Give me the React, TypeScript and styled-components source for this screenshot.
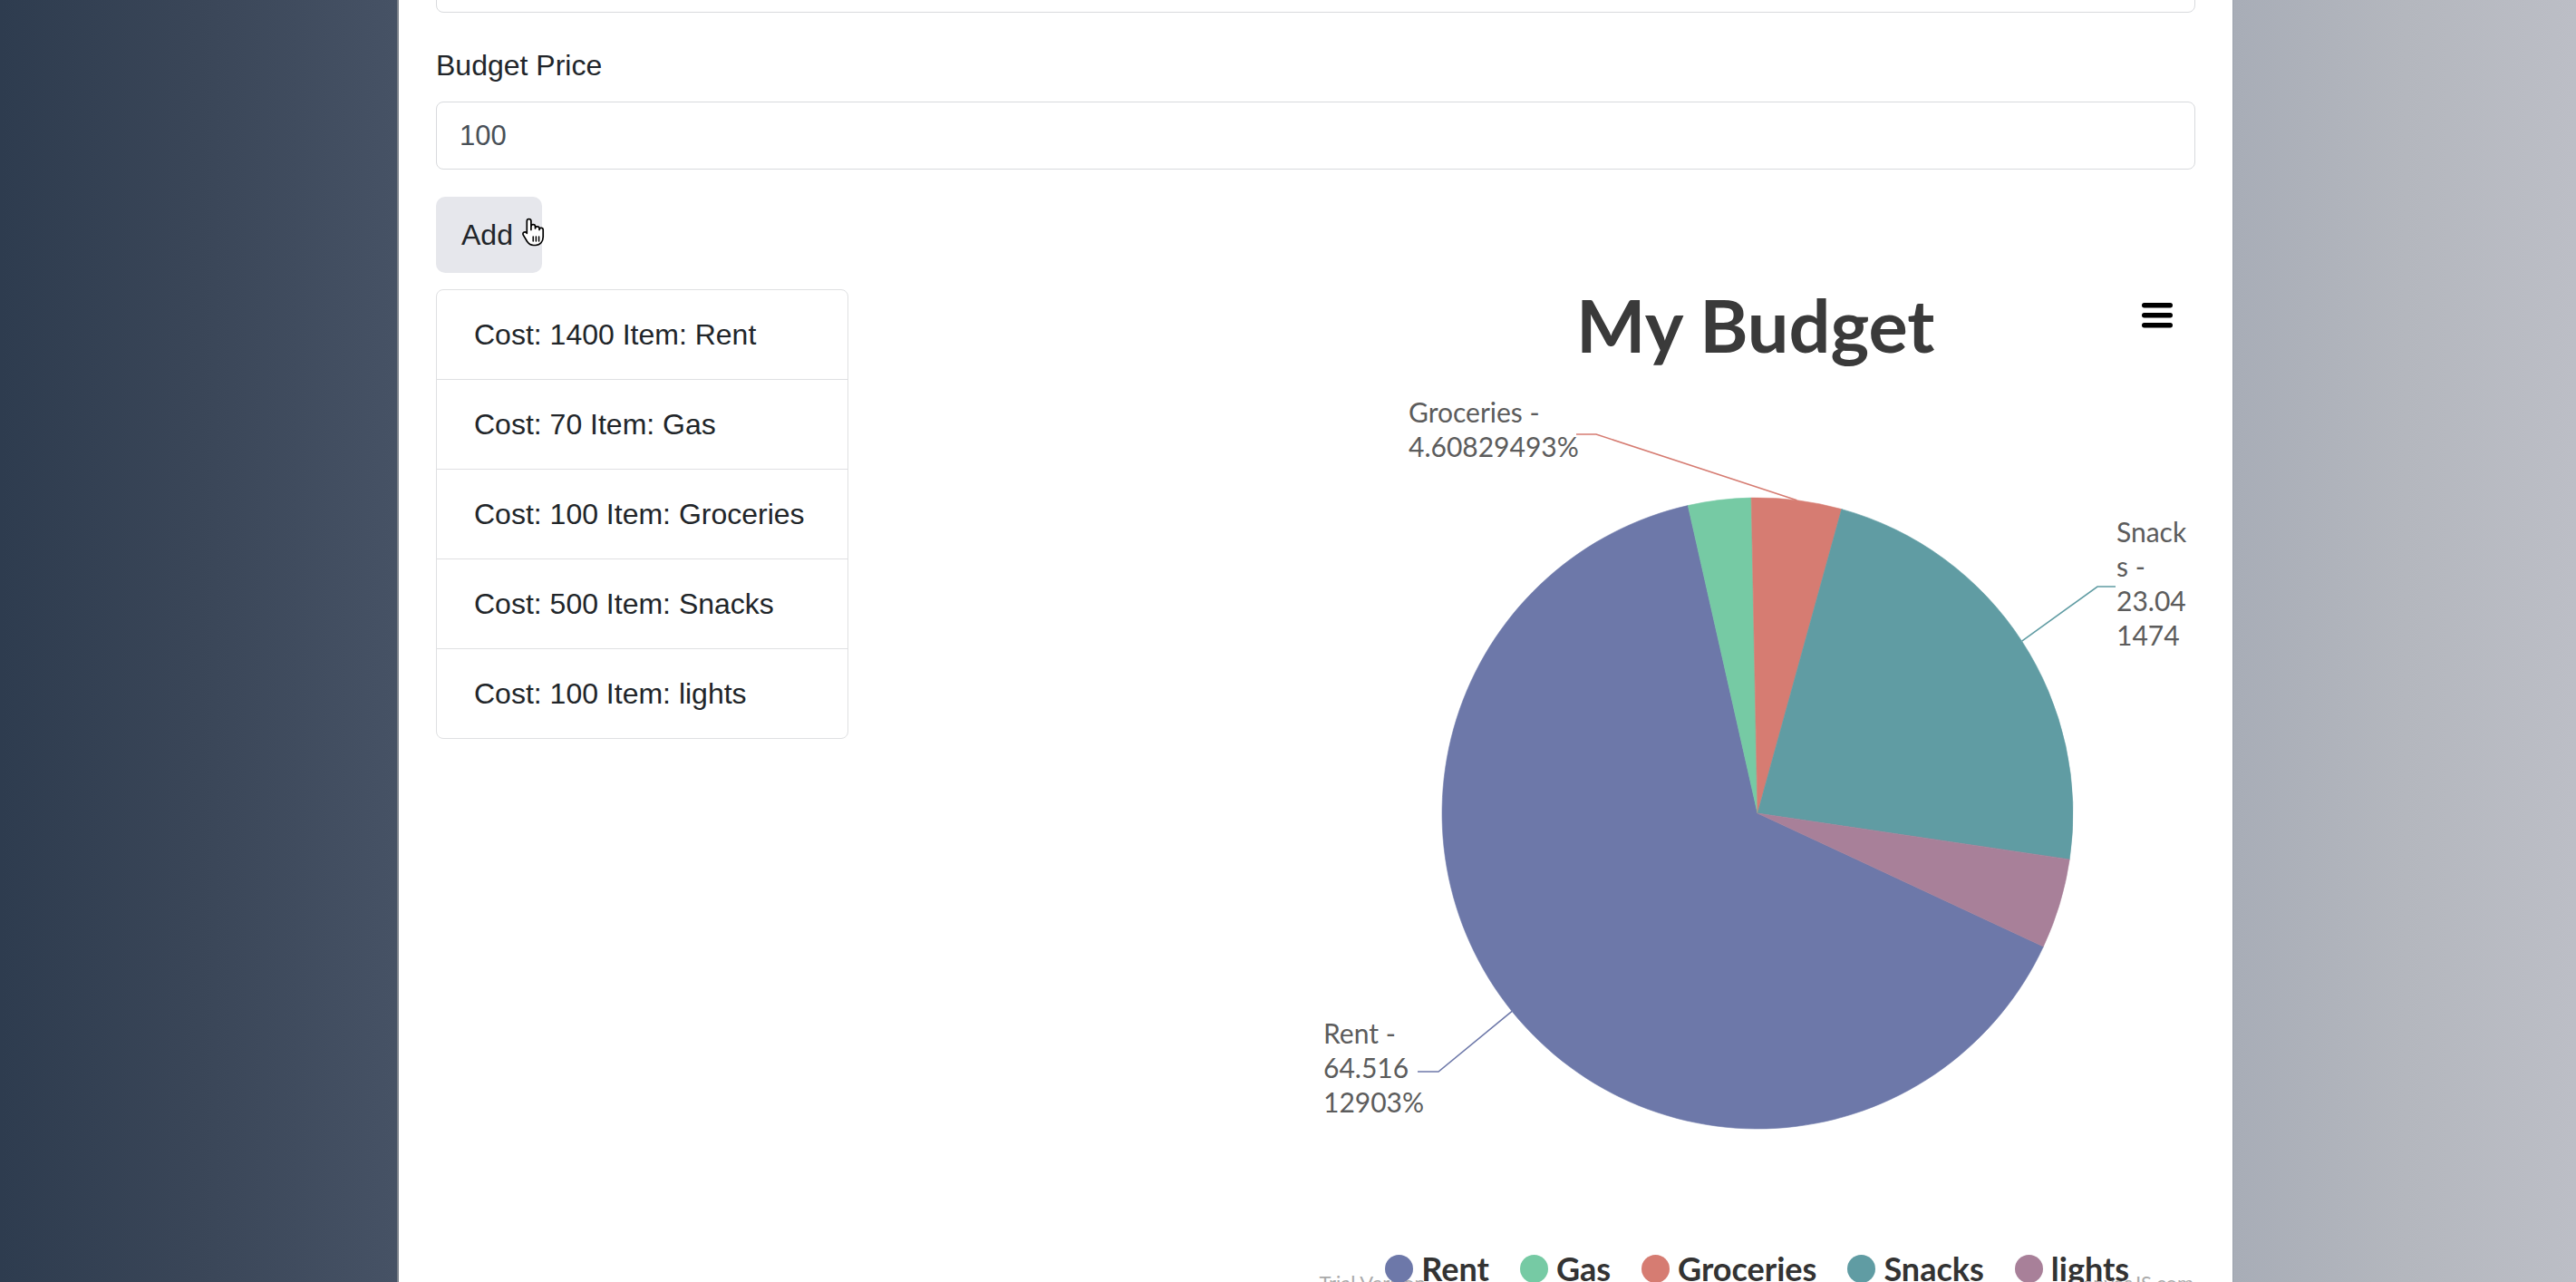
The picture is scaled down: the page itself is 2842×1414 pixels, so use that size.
import styled, { createGlobalStyle } from 'styled-components';

type Expense = {
  cost: number;
  name: string;
  color: string;
};

type SliceLabel = {
  name: string;
  lines: string[];
  x: number;
  y: number;
  elbow: [number, number][];
};

const expenses: Expense[] = [
  { cost: 1400, name: 'Rent', color: '#6d78a9' },
  { cost: 70, name: 'Gas', color: '#76caa4' },
  { cost: 100, name: 'Groceries', color: '#d67c72' },
  { cost: 500, name: 'Snacks', color: '#609ca3' },
  { cost: 100, name: 'lights', color: '#a88099' },
];

const PIE = { cx: 487, cy: 494, r: 348, start: 25 };
const LINE_HEIGHT = 38;

// only the labels that the chart drew; gas and lights are hidden
const sliceLabels: SliceLabel[] = [
  {
    name: 'Groceries',
    lines: ['Groceries -', '4.60829493%'],
    x: 102,
    y: 63,
    elbow: [
      [287, 76],
      [309, 76],
    ],
  },
  {
    name: 'Snacks',
    lines: ['Snack', 's -', '23.04', '1474'],
    x: 883,
    y: 195,
    elbow: [
      [882, 244],
      [862, 244],
    ],
  },
  {
    name: 'Rent',
    lines: ['Rent -', '64.516', '12903%'],
    x: 8,
    y: 748,
    elbow: [
      [112, 779],
      [135, 779],
    ],
  },
];

const toRad = (deg: number) => (deg * Math.PI) / 180;

const pointAt = (deg: number, r = PIE.r) => [PIE.cx + r * Math.cos(toRad(deg)), PIE.cy + r * Math.sin(toRad(deg))];

const arcPath = (from: number, to: number) => {
  const [x0, y0] = pointAt(from);
  const [x1, y1] = pointAt(to);
  const large = to - from > 180 ? 1 : 0;
  return `M${PIE.cx} ${PIE.cy} L${x0} ${y0} A${PIE.r} ${PIE.r} 0 ${large} 1 ${x1} ${y1} Z`;
};

const total = expenses.reduce((sum, e) => sum + e.cost, 0);

const slices = expenses.reduce<{ expense: Expense; from: number; to: number }[]>((acc, expense) => {
  const from = acc.length ? acc[acc.length - 1].to : PIE.start;
  acc.push({ expense, from, to: from + (expense.cost / total) * 360 });
  return acc;
}, []);

const GlobalStyle = createGlobalStyle`
  html, body {
    margin: 0;
    padding: 0;
    height: 100%;
    overflow: hidden;
  }
  body {
    font-family: "Liberation Sans", Arial, sans-serif;
    color: #212529;
  }
  * {
    box-sizing: border-box;
  }
`;

export default function App() {
  return (
    <>
      <GlobalStyle />
      <Screen>
        <DesktopLeft />
        <Panel>
          <TitleInput readOnly value="lights" />
          <FormGroup>
            <Label>Budget Price</Label>
            <TextInput readOnly value="100" />
          </FormGroup>
          <AddButton>
            Add
            <HandCursor />
          </AddButton>
          <ContentRow>
            <ItemList>
              {expenses.map((e) => (
                <Item key={e.name}>
                  Cost: {e.cost} Item: {e.name}
                </Item>
              ))}
            </ItemList>
            <BudgetChart />
          </ContentRow>
        </Panel>
        <DesktopRight />
      </Screen>
    </>
  );
}

function BudgetChart() {
  return (
    <Chart>
      <ChartHeader>
        <ChartTitle>My Budget</ChartTitle>
        <MenuButton aria-label="chart menu">
          <svg width="34" height="30" viewBox="0 0 34 30">
            <rect x="0" y="1" width="34" height="5.5" rx="2.7" fill="#000" />
            <rect x="0" y="12" width="34" height="5.5" rx="2.7" fill="#000" />
            <rect x="0" y="23" width="34" height="5.5" rx="2.7" fill="#000" />
          </svg>
        </MenuButton>
      </ChartHeader>

      <PieSvg viewBox="0 0 970 976" width="970" height="976">
        {slices.map(({ expense, from, to }) => (
          <path
            key={expense.name}
            d={arcPath(from, to)}
            fill={expense.color}
            stroke={expense.color}
            strokeWidth="0.6"
          />
        ))}
        {sliceLabels.map((label) => {
          const slice = slices.find((s) => s.expense.name === label.name)!;
          const [ax, ay] = pointAt((slice.from + slice.to) / 2);
          const points = [...label.elbow, [ax, ay]].map((p) => p.join(',')).join(' ');
          return (
            <g key={label.name}>
              <polyline points={points} fill="none" stroke={slice.expense.color} strokeWidth="1.6" />
              <LabelText x={label.x} y={label.y}>
                {label.lines.map((line, i) => (
                  <tspan key={line} x={label.x} dy={i === 0 ? 0 : LINE_HEIGHT}>
                    {line}
                  </tspan>
                ))}
              </LabelText>
            </g>
          );
        })}
      </PieSvg>

      <LegendArea>
        <Watermark $side="left">Trial Version</Watermark>
        <Watermark $side="right">CanvasJS.com</Watermark>
        <Legend>
          {expenses.map((e) => (
            <LegendItem key={e.name}>
              <LegendDot $color={e.color} />
              {e.name}
            </LegendItem>
          ))}
        </Legend>
      </LegendArea>
    </Chart>
  );
}

function HandCursor() {
  return (
    <CursorSvg width="28" height="36" viewBox="0 0 28 36">
      <path
        d="M8.5 2.5c1.4 0 2.4 1 2.4 2.4v9.6V11c0-1.3 1-2.3 2.3-2.3s2.3 1 2.3 2.3v2c0-1.3 1-2.2 2.2-2.2s2.3 1 2.3 2.2v1.4c0-1.2 1-2.1 2.1-2.1s2.1.9 2.1 2.2v7.8c0 5-3.2 9.2-8.4 9.2h-2.2c-3.2 0-5.3-1.6-7.1-4.2L2.4 20.4c-.8-1.2-.5-2.600.5-3.200 1-.6 2.300-.3 3.100.7l.3.4V4.9c0-1.400.8-2.400 2.200-2.400z"
        fill="#fff"
        stroke="#000"
        strokeWidth="1.7"
        strokeLinejoin="round"
      />
      <path d="M13.2 22v5M16.4 22v5M19.6 22v5" stroke="#000" strokeWidth="1.5" strokeLinecap="round" />
    </CursorSvg>
  );
}

const Screen = styled.div`
  display: flex;
  width: 100vw;
  height: 100vh;
  overflow: hidden;
`;

const DesktopLeft = styled.div`
  flex: 0 0 440px;
  background: linear-gradient(90deg, #2e3c4f 0%, #3a4658 50%, #465265 100%);
  border-right: 2px solid #7c828b;
`;

const DesktopRight = styled.div`
  flex: 0 0 379px;
  background: linear-gradient(90deg, #a8adb7 0%, #b4b7be 50%, #bcbec6 100%);
  border-left: 1px solid #9ca2ad;
`;

const Panel = styled.main`
  flex: 1;
  background: #fff;
  padding: 0 41px;
`;

const TextInput = styled.input`
  display: block;
  width: 100%;
  height: 75px;
  padding: 0 25px;
  border: 1.5px solid #d8dadd;
  border-radius: 8px;
  font-family: "Liberation Sans", Arial, sans-serif;
  font-size: 31px;
  color: #495057;
  background: #fff;
  outline: none;
`;

const TitleInput = styled(TextInput)`
  margin-top: -61px;
  color: transparent;
`;

const FormGroup = styled.div`
  margin-top: 34px;
`;

const Label = styled.label`
  display: block;
  font-size: 32px;
  line-height: 48px;
  margin-bottom: 16px;
  color: #212529;
`;

const AddButton = styled.button`
  position: relative;
  display: inline-flex;
  align-items: center;
  height: 84px;
  margin-top: 30px;
  padding: 0 32px 0 28px;
  border: none;
  border-radius: 10px;
  background: #e6e7ec;
  font-family: "Liberation Sans", Arial, sans-serif;
  font-size: 32px;
  color: #212529;
`;

const CursorSvg = styled.svg`
  position: absolute;
  left: 94px;
  top: 22px;
`;

const ContentRow = styled.div`
  display: grid;
  grid-template-columns: 1fr 1fr;
  margin-top: 18px;
`;

const ItemList = styled.ul`
  align-self: start;
  width: 455px;
  margin: 0;
  padding: 0;
  list-style: none;
  border: 1px solid #dfe0e2;
  border-radius: 8px;
`;

const Item = styled.li`
  display: flex;
  align-items: center;
  height: 98px;
  padding: 0 41px;
  font-size: 32px;
  color: #212529;

  & + & {
    border-top: 1px solid #dfe0e2;
    height: 99px;
  }
`;

const Chart = styled.section`
  display: flex;
  flex-direction: column;
  font-family: Lato, "Open Sans", sans-serif;
`;

const ChartHeader = styled.div`
  position: relative;
  height: 84px;
  text-align: center;
`;

const ChartTitle = styled.h2`
  margin: 0;
  font-size: 81px;
  line-height: 78px;
  font-weight: 700;
  color: #3a3a3a;
`;

const MenuButton = styled.button`
  position: absolute;
  right: 25px;
  top: 14px;
  padding: 0;
  border: none;
  background: transparent;
  line-height: 0;
`;

const PieSvg = styled.svg`
  display: block;
`;

const LabelText = styled.text`
  font-family: Lato, "Open Sans", sans-serif;
  font-size: 30px;
  fill: #5c5c5c;
`;

const LegendArea = styled.div`
  position: relative;
`;

const Legend = styled.div`
  position: relative;
  display: flex;
  justify-content: center;
  gap: 34px;
  padding-left: 4px;
`;

const LegendItem = styled.div`
  display: flex;
  align-items: center;
  gap: 9px;
  font-size: 36px;
  line-height: 40px;
  font-weight: 700;
  color: #333;
`;

const LegendDot = styled.span<{ $color: string }>`
  width: 31px;
  height: 31px;
  border-radius: 50%;
  background: ${({ $color }) => $color};
`;

const Watermark = styled.span<{ $side: 'left' | 'right' }>`
  position: absolute;
  top: 22px;
  ${({ $side }) => ($side === 'left' ? 'left: 4px;' : 'right: 2px;')}
  font-size: 22px;
  color: #aaa;
`;
